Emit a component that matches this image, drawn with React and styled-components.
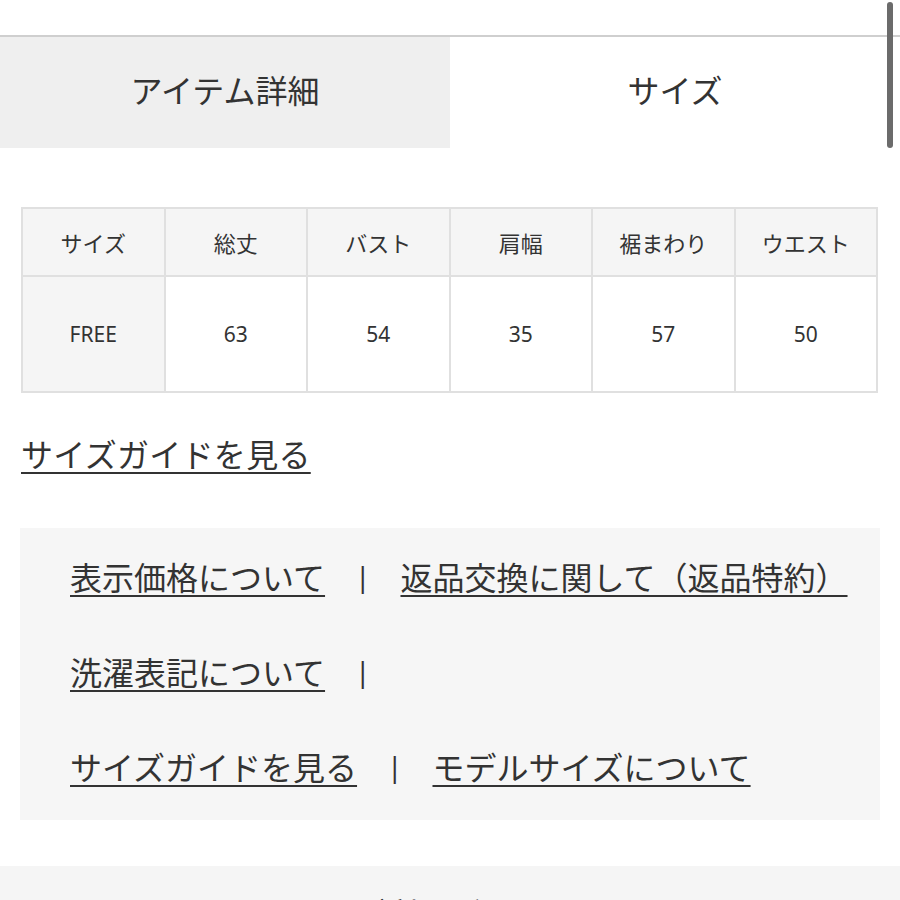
import styled, { createGlobalStyle } from 'styled-components';

const GlobalStyle = createGlobalStyle`
    html, body {
        margin: 0;
        padding: 0;
        background: #ffffff;
    }
    body {
        font-family: "Noto Sans", "Noto Sans CJK JP", sans-serif;
        color: #333333;
    }
`;

const Page = styled.div`
    position: relative;
    width: 900px;
    height: 900px;
    overflow: hidden;
    background: #ffffff;
    padding-top: 35px;
    box-sizing: border-box;
`;

const Scrollbar = styled.div`
    position: absolute;
    right: 7px;
    top: 2px;
    width: 6px;
    height: 146px;
    border-radius: 3px;
    background: #6b6b6b;
`;

const Tabs = styled.div`
    display: flex;
    border-top: 2px solid #cfcfcf;
`;

const Tab = styled.div`
    flex: 1;
    height: 111px;
    padding-bottom: 8px;
    box-sizing: border-box;
    display: flex;
    align-items: center;
    justify-content: center;
    font-size: 32px;
    color: #333333;
    background: ${(p) => (p.$active ? '#ffffff' : '#efefef')};
`;

const Content = styled.div`
    padding: 59px 22px 0 21px;
`;

const SizeTable = styled.table`
    width: 857px;
    border-collapse: collapse;
    table-layout: fixed;
`;

const Cell = styled.td`
    border: 2px solid #e0e0e0;
    text-align: center;
    vertical-align: middle;
    padding: 0;
    font-size: ${(p) => (p.$head ? '22px' : '21px')};
    height: ${(p) => (p.$head ? '66px' : '114px')};
    background: ${(p) => (p.$shade ? '#f5f5f5' : '#ffffff')};
    color: #333333;
`;

const GuideLink = styled.a`
    display: inline-block;
    margin-top: 38px;
    font-size: 32px;
    line-height: 48px;
    letter-spacing: 0.3px;
    color: #333333;
    text-decoration: underline;
    text-decoration-thickness: 2px;
    text-underline-offset: 5px;
`;

const InfoBox = styled.div`
    margin: 49px 20px 0 20px;
    padding: 0 50px 7px;
    background: #f6f6f6;
`;

const InfoRow = styled.div`
    display: flex;
    align-items: center;
    height: 95px;
    gap: 30px;
    font-size: 32px;
`;

const InfoLink = styled.a`
    color: #333333;
    white-space: nowrap;
    text-decoration: underline;
    text-decoration-thickness: 2px;
    text-underline-offset: 5px;
`;

const Divider = styled.span`
    color: #333333;
    font-size: 28px;
`;

const FooterBar = styled.div`
    margin-top: 46px;
    height: 60px;
    background: #f5f5f5;
    display: flex;
    justify-content: center;
    padding-top: 28px;
    box-sizing: border-box;
    font-size: 32px;
    line-height: 40px;
    color: #333333;
`;

const heads = ['サイズ', '総丈', 'バスト', '肩幅', '裾まわり', 'ウエスト'];
const values = ['FREE', '63', '54', '35', '57', '50'];

const rows = [
    ['表示価格について', '返品交換に関して（返品特約）'],
    ['洗濯表記について', null],
    ['サイズガイドを見る', 'モデルサイズについて'],
];

export default function App() {
    return (
        <Page>
            <GlobalStyle />
            <Scrollbar />
            <Tabs>
                <Tab>アイテム詳細</Tab>
                <Tab $active>サイズ</Tab>
            </Tabs>
            <Content>
                <SizeTable>
                    <tbody>
                        <tr>
                            {heads.map((h) => (
                                <Cell key={h} $head $shade>{h}</Cell>
                            ))}
                        </tr>
                        <tr>
                            {values.map((v, i) => (
                                <Cell key={i} $shade={i === 0}>{v}</Cell>
                            ))}
                        </tr>
                    </tbody>
                </SizeTable>
                <GuideLink href="#">サイズガイドを見る</GuideLink>
            </Content>
            <InfoBox>
                {rows.map(([a, b]) => (
                    <InfoRow key={a}>
                        <InfoLink href="#">{a}</InfoLink>
                        <Divider>|</Divider>
                        {b && <InfoLink href="#">{b}</InfoLink>}
                    </InfoRow>
                ))}
            </InfoBox>
            <FooterBar>ご利用ガイド</FooterBar>
        </Page>
    );
}
